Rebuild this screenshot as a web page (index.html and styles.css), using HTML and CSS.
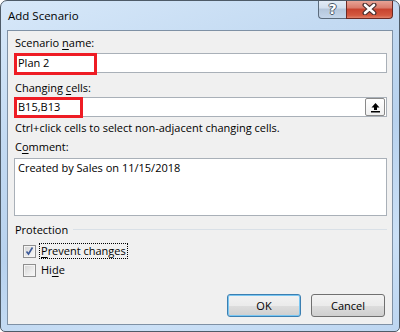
FILE: index.html
```html
<!DOCTYPE html>
<html>
<head>
<meta charset="utf-8">
<link rel="stylesheet" href="styles.css">
</head>
<body>
<div class="window">
  <div class="titlebar">
    <span class="title">Add Scenario</span>
    <div class="caption-btns">
      <div class="cbtn help"><span class="qmark">?</span></div>
      <div class="cbtn close">
        <svg width="15" height="12" viewBox="0 0 15 12">
          <path d="M3 2 L12 10 M12 2 L3 10" stroke="#4a3030" stroke-width="5" stroke-linecap="round" fill="none"/>
          <path d="M3 2 L12 10 M12 2 L3 10" stroke="#ffffff" stroke-width="2.6" stroke-linecap="round" fill="none"/>
        </svg>
      </div>
    </div>
  </div>
  <div class="content">
    <div class="label first">Scenario <u>n</u>ame:</div>
    <div class="field f-name">
      <span class="val">Plan 2</span>
      <div class="mark mark-name"></div>
    </div>
    <div class="label second">Changing <u>c</u>ells:</div>
    <div class="field f-cells">
      <span class="val">B15,B13</span>
      <div class="refbtn">
        <svg width="11" height="11" viewBox="0 0 11 11">
          <path d="M5.5 1 L9.5 5.5 L7 5.5 L7 8 L4 8 L4 5.5 L1.5 5.5 Z" fill="#000"/>
          <rect x="1" y="9" width="9" height="1.5" fill="#000"/>
        </svg>
      </div>
      <div class="mark mark-cells"></div>
    </div>
    <div class="hint">Ctrl+click cells to select non-adjacent changing cells.</div>
    <div class="label third">C<u>o</u>mment:</div>
    <div class="textarea"><span class="val">Created by Sales on 11/15/2018</span></div>
    <div class="group">
      <span class="group-label">Protection</span>
      <span class="group-line"></span>
    </div>
    <div class="check-row row1">
      <span class="box">
        <svg width="11" height="11" viewBox="0 0 11 11">
          <path d="M2.5 5.5 L4.5 8 L8.5 1.5" stroke="#3d5a99" stroke-width="1.6" fill="none"/>
        </svg>
      </span>
      <span class="check-text focus"><u>P</u>revent changes</span>
    </div>
    <div class="check-row row2">
      <span class="box"></span>
      <span class="check-text">Hi<u>d</u>e</span>
    </div>
    <div class="buttons">
      <div class="btn default">OK</div>
      <div class="btn">Cancel</div>
    </div>
  </div>
</div>
</body>
</html>
```

FILE: styles.css
```css
html, body {
  margin: 0;
  padding: 0;
  background: #ffffff;
}
body {
  font-family: "Open Sans", "Noto Sans", sans-serif;
  font-size: 11px;
  color: #000;
}
u { text-decoration: underline; text-underline-offset: 2px; }

.window {
  width: 400px;
  height: 332px;
  box-sizing: border-box;
  border: 1px solid #4e5b68;
  border-radius: 7px 7px 5px 5px;
  background: linear-gradient(160deg, #d7e8f9 0%, #c3daf2 30%, #b8d2ee 55%, #cbe0f6 80%, #bdd6f1 100%);
  display: flex;
  flex-direction: column;
  overflow: hidden;
}

.titlebar {
  height: 29px;
  display: flex;
  align-items: center;
  position: relative;
}
.title {
  padding-left: 7px;
  font-size: 11.5px;
  color: #000;
  flex: 1;
}
.caption-btns {
  align-self: flex-start;
  display: flex;
  margin-right: 6px;
  margin-top: -1px;
}
.cbtn {
  height: 19px;
  box-sizing: border-box;
  border: 1px solid #5b6b7c;
  border-top: none;
  display: flex;
  align-items: center;
  justify-content: center;
}
.help {
  width: 28px;
  border-radius: 0 0 0 4px;
  border-right: none;
  background: linear-gradient(#e4edf7 0%, #d2dfee 45%, #b4c6db 50%, #c5d6ea 100%);
}
.qmark {
  font-family: "DejaVu Sans", sans-serif;
  font-weight: bold;
  font-size: 14px;
  line-height: 14px;
  color: #ffffff;
  text-shadow: -1px 0 #4b5a6a, 1px 0 #4b5a6a, 0 -1px #4b5a6a, 0 1px #4b5a6a;
}
.close {
  width: 47px;
  border-radius: 0 0 4px 0;
  border-color: #6b2a24;
  background: linear-gradient(#e9a99c 0%, #d97a6a 45%, #c7422f 50%, #d3583f 85%, #e0826b 100%);
}

.content {
  flex: 1;
  margin: 0 6px 6px 6px;
  border: 1px solid #7f91a5;
  background: #f0f0f0;
  padding: 0 5px 0 6px;
  display: flex;
  flex-direction: column;
}

.label {
  height: 16px;
  line-height: 16px;
  padding-left: 1px;
}
.label.first { margin-top: 4px; }
.label.second { margin-top: 7px; }
.label.third { margin-top: 3px; }

.field {
  position: relative;
  height: 20px;
  box-sizing: border-box;
  border: 1px solid #a9b0b8;
  background: #fff;
  display: flex;
  align-items: center;
}
.f-name { margin-top: 2px; }
.f-cells { margin-top: 1px; }
.val {
  padding-left: 3px;
  line-height: 16px;
}

.mark {
  position: absolute;
  border: 3px solid #ee1c24;
  box-sizing: border-box;
  left: -1px;
  top: -1px;
}
.mark-name { width: 83px; height: 22px; }
.mark-cells { width: 69px; height: 21px; }

.refbtn {
  margin-left: auto;
  margin-right: 1px;
  width: 20px;
  height: 18px;
  box-sizing: border-box;
  border: 1px solid #8a8a8a;
  border-radius: 2px;
  background: linear-gradient(#ffffff, #f0f0f0);
  display: flex;
  align-items: center;
  justify-content: center;
}

.hint {
  margin-top: 3px;
  height: 16px;
  line-height: 16px;
  padding-left: 1px;
}

.textarea {
  margin-top: 3px;
  height: 58px;
  box-sizing: border-box;
  border: 1px solid #a9b0b8;
  background: #fff;
  padding-top: 1px;
}

.group {
  margin-top: 6px;
  height: 16px;
  display: flex;
  align-items: center;
  padding-left: 1px;
}
.group-label { line-height: 16px; }
.group-line {
  flex: 1;
  height: 1px;
  background: #d9e0e7;
  margin-left: 5px;
  margin-top: -1px;
}

.check-row {
  height: 16px;
  display: flex;
  align-items: center;
  padding-left: 9px;
}
.row1 { margin-top: 5px; }
.row2 { margin-top: 3px; }
.box {
  width: 13px;
  height: 13px;
  box-sizing: border-box;
  border: 1px solid #8f8f8f;
  background: linear-gradient(135deg, #d4d4d4 0%, #ececec 60%, #f8f8f8 100%);
  box-shadow: inset 0 0 0 1px #f4f4f4;
  display: flex;
  align-items: center;
  justify-content: center;
}
.check-text {
  margin-left: 3px;
  line-height: 14px;
  padding: 0 1px;
  border: 1px solid transparent;
}
.check-text.focus { border: 1px dotted #000; }

.buttons {
  margin-top: 16px;
  display: flex;
  justify-content: flex-end;
  gap: 10px;
  margin-right: 2px;
}
.btn {
  width: 74px;
  height: 23px;
  box-sizing: border-box;
  border: 1px solid #707070;
  border-radius: 3px;
  background: linear-gradient(#f2f2f2 0%, #ebebeb 50%, #dddddd 51%, #cfcfcf 100%);
  display: flex;
  align-items: center;
  justify-content: center;
  line-height: 16px;
}
.btn.default {
  border-color: #3c7fb1;
  box-shadow: inset 0 0 0 1px #79c6f2;
}
```
